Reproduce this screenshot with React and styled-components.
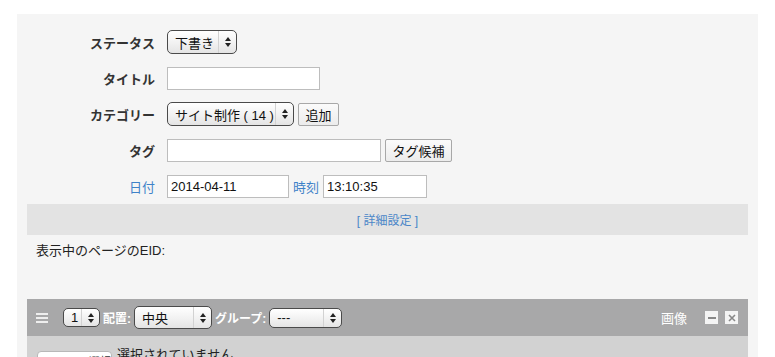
import React from "react";
import styled, { createGlobalStyle } from "styled-components";

const GlobalStyle = createGlobalStyle`
  body {
    margin: 0;
    background: #ffffff;
    font-family: "Liberation Sans", "Noto Sans CJK JP", sans-serif;
    color: #222;
  }
`;

const Arrows = () => (
  <svg width="6" height="10" viewBox="0 0 6 10">
    <path d="M3 0 L6 4 L0 4 Z" fill="#222" />
    <path d="M3 10 L6 6 L0 6 Z" fill="#222" />
  </svg>
);

const Select = ({ children, width, height = 24 }) => (
  <SelectBox $width={width} $height={height}>
    <SelectText>{children}</SelectText>
    <SelectArrow>
      <Arrows />
    </SelectArrow>
  </SelectBox>
);

const App = () => {
  return (
    <>
      <GlobalStyle />
      <Panel>
        <Form>
          <Label>ステータス</Label>
          <Field>
            <Select width={70}>下書き</Select>
          </Field>

          <Label>タイトル</Label>
          <Field>
            <Input $width={153} />
          </Field>

          <Label>カテゴリー</Label>
          <Field>
            <Select width={127}>サイト制作 ( 14 )</Select>
            <Button $width={41}>追加</Button>
          </Field>

          <Label>タグ</Label>
          <Field>
            <Input $width={214} />
            <Button $width={67}>タグ候補</Button>
          </Field>

          <Label $link>日付</Label>
          <Field>
            <Input $width={122} defaultValue="2014-04-11" />
            <InlineLabel>時刻</InlineLabel>
            <Input $width={104} defaultValue="13:10:35" />
          </Field>
        </Form>

        <DetailBar>
          <DetailLink>[ 詳細設定 ]</DetailLink>
        </DetailBar>

        <EidText>表示中のページのEID:</EidText>

        <Toolbar>
          <Hamburger>
            <span />
            <span />
            <span />
          </Hamburger>
          <Select width={37} height={19}>1</Select>
          <ToolLabel>配置:</ToolLabel>
          <Select width={78} height={23}>中央</Select>
          <ToolLabel>グループ:</ToolLabel>
          <Select width={73} height={20}>---</Select>
          <ToolRight>
            <ToolTitle>画像</ToolTitle>
            <IconBox>
              <svg width="8" height="8" viewBox="0 0 8 8">
                <rect x="0" y="3" width="8" height="2" fill="#888" />
              </svg>
            </IconBox>
            <IconBox>
              <svg width="8" height="8" viewBox="0 0 8 8">
                <path d="M1 1 L7 7 M7 1 L1 7" stroke="#888" strokeWidth="1.6" />
              </svg>
            </IconBox>
          </ToolRight>
        </Toolbar>

        <ItemBody>
          <FileButton>ファイル選択</FileButton>
          <FileText>選択されていません</FileText>
        </ItemBody>
      </Panel>
    </>
  );
};

export default App;

const Panel = styled.div`
  margin: 14px 0 0 17px;
  width: 741px;
  height: 343px;
  background: #f5f5f5;
  overflow: hidden;
`;

const Form = styled.div`
  display: grid;
  grid-template-columns: 138px 1fr;
  column-gap: 12px;
  row-gap: 12px;
  padding-top: 16px;
  align-items: center;
`;

const Label = styled.div`
  text-align: right;
  font-size: 13px;
  font-weight: ${(p) => (p.$link ? "normal" : "bold")};
  color: ${(p) => (p.$link ? "#3f82c8" : "#333")};
`;

const Field = styled.div`
  display: flex;
  align-items: center;
  gap: 4px;
  height: 24px;
`;

const SelectBox = styled.div`
  box-sizing: border-box;
  width: ${(p) => p.$width}px;
  height: ${(p) => p.$height}px;
  display: flex;
  align-items: stretch;
  border: 1px solid #4a4a4a;
  border-radius: 5px;
  background: linear-gradient(#ffffff, #f0f0f0 60%, #e4e4e4);
  overflow: hidden;
  flex-shrink: 0;
`;

const SelectText = styled.span`
  flex: 1;
  display: flex;
  align-items: center;
  padding-left: 7px;
  font-size: 13px;
  color: #111;
  white-space: nowrap;
`;

const SelectArrow = styled.span`
  width: 17px;
  display: flex;
  align-items: center;
  justify-content: center;
  border-left: 1px solid #d2d2d2;
`;

const Input = styled.input`
  box-sizing: border-box;
  width: ${(p) => p.$width}px;
  height: 23px;
  border: 1px solid #bdbdbd;
  background: #fff;
  padding: 0 3px;
  font-family: inherit;
  font-size: 13px;
  color: #111;
  outline: none;
`;

const Button = styled.button`
  box-sizing: border-box;
  width: ${(p) => p.$width}px;
  height: 23px;
  border: 1px solid #a8a8a8;
  border-radius: 2px;
  background: linear-gradient(#fbfbfb, #ececec);
  font-family: inherit;
  font-size: 13px;
  color: #111;
  padding: 0;
`;

const InlineLabel = styled.span`
  font-size: 13px;
  color: #3f82c8;
  margin: 0 0 0 0;
`;

const DetailBar = styled.div`
  margin: 6px 10px 0;
  height: 31px;
  background: #e3e3e3;
  display: flex;
  align-items: center;
  justify-content: center;
`;

const DetailLink = styled.span`
  font-size: 12px;
  color: #4a86c8;
`;

const EidText = styled.div`
  padding: 5px 0 0 19px;
  height: 59px;
  font-size: 13px;
  color: #222;
`;

const Toolbar = styled.div`
  margin: 0 10px;
  height: 37px;
  background: #a8a8a9;
  display: flex;
  align-items: center;
  gap: 3px;
  padding: 0 10px 0 9px;
`;

const Hamburger = styled.div`
  width: 12px;
  display: flex;
  flex-direction: column;
  gap: 2px;
  margin-right: 12px;

  span {
    height: 2px;
    background: #eeeeee;
  }
`;

const ToolLabel = styled.span`
  font-size: 12px;
  font-weight: bold;
  color: #ffffff;
`;

const ToolRight = styled.div`
  margin-left: auto;
  display: flex;
  align-items: center;
  gap: 7px;
`;

const ToolTitle = styled.span`
  font-size: 13px;
  color: #ffffff;
  margin-right: 11px;
`;

const IconBox = styled.span`
  width: 13px;
  height: 13px;
  background: #f4f4f4;
  display: flex;
  align-items: center;
  justify-content: center;
`;

const ItemBody = styled.div`
  margin: 0 10px;
  height: 40px;
  background: #d2d2d2;
  display: flex;
  align-items: flex-start;
  gap: 5px;
  padding: 8px 0 0 10px;
`;

const FileButton = styled.button`
  margin-top: 7px;
  width: 75px;
  height: 20px;
  border: 1px solid #b8b8b8;
  border-radius: 4px;
  background: #ffffff;
  font-family: inherit;
  font-size: 11px;
  color: #333;
  padding: 0;
  text-align: right;
`;

const FileText = styled.span`
  font-size: 13px;
  color: #222;
`;
